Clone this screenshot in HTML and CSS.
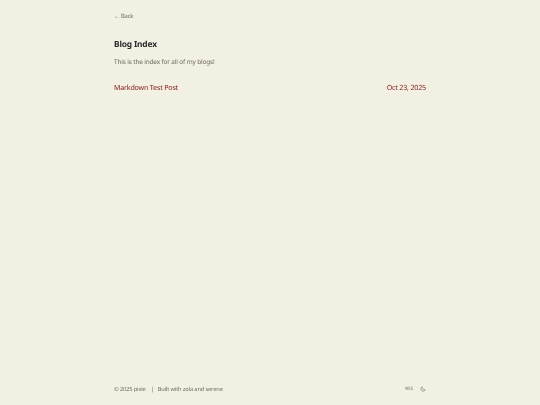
FILE: index.html
```html
<!DOCTYPE html>
<html lang="en">
<head>
<meta charset="utf-8">
<title>Blog Index</title>
<link rel="stylesheet" href="styles.css">
</head>
<body>
<div class="page">
  <main class="content">
    <a class="back" href="#">← Back</a>
    <h1 class="title">Blog Index</h1>
    <p class="desc">This is the index for all of my blogs!</p>
    <a class="post" href="#"><span>Markdown Test Post</span><span>Oct 23, 2025</span></a>
  </main>
  <footer class="footer">
    <div class="credits"><span>© 2025 pixie</span><span class="sep">|</span><span>Built with zola and serene</span></div>
    <div class="tools">
      <span class="rss">RSS</span>
      <svg class="moon" viewBox="0 0 16 16" width="6" height="6" aria-hidden="true"><path d="M6 2.2a6 6 0 1 0 7.8 7.8A6.5 6.5 0 0 1 6 2.2z"/></svg>
    </div>
  </footer>
</div>
</body>
</html>
```
FILE: styles.css
```css
* { box-sizing: border-box; }
html, body { margin: 0; height: 100%; }
body {
  background: #f2efe3;
  color: #2e2e2e;
  font-family: "Noto Sans", sans-serif;
  text-rendering: geometricPrecision;
}
.page {
  width: 312px;
  height: 405px;
  margin: 0 auto;
  display: flex;
  flex-direction: column;
  justify-content: space-between;
  filter: blur(0.35px);
}
.content { display: flex; flex-direction: column; align-items: flex-start; padding-top: 11.5px; }
.back { font-size: 5.8px; line-height: 9px; letter-spacing: -0.17px; color: #6c6a63; text-decoration: none; }
.title { margin: 18.5px 0 0; font-size: 8.4px; line-height: 12px; letter-spacing: -0.16px; font-weight: 700; color: #2a2a2a; }
.desc { margin: 5px 0 0; font-size: 6.4px; line-height: 11px; letter-spacing: -0.13px; color: #6c6a63; }
.post {
  width: 100%;
  margin-top: 15px;
  display: flex;
  justify-content: space-between;
  font-size: 7.1px;
  line-height: 12px;
  letter-spacing: -0.18px;
  color: #7f1a1a;
  text-decoration: none;
}
.footer {
  display: flex;
  justify-content: space-between;
  align-items: center;
  padding-bottom: 11px;
  font-size: 5.7px;
  line-height: 9px;
  letter-spacing: -0.14px;
  color: #6c6a63;
}
.sep { margin: 0 4px 0 5px; }
.tools { display: flex; align-items: center; gap: 7px; }
.rss { font-size: 4.5px; letter-spacing: 0; }
.moon { margin-bottom: 2px; fill: none; stroke: #6c6a63; stroke-width: 1.5; }
```
